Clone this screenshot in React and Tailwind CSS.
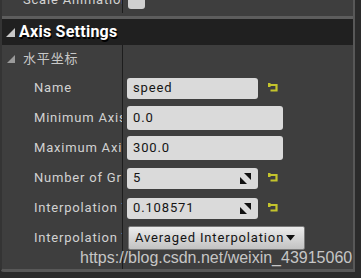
const YELLOW = '#c4c42c'

function ResetIcon() {
  return (
    <svg width="10" height="9" viewBox="0 0 10 9" className="shrink-0">
      <rect x="0" y="0" width="2.5" height="4" fill={YELLOW} />
      <path d="M1 2H8.5V7.5H2.5" stroke={YELLOW} strokeWidth="2.2" fill="none" />
    </svg>
  )
}

function SpinIcon() {
  return (
    <svg width="11" height="11" viewBox="0 0 11 11" className="shrink-0">
      <polygon points="4,0 11,0 11,7" fill="#111" />
      <polygon points="0,4 0,11 7,11" fill="#111" />
    </svg>
  )
}

function Tri({ size = 9, color = '#c4c4c4' }) {
  return (
    <svg width={size} height={size} viewBox="0 0 9 9" className="shrink-0">
      <polygon points="9,0 9,9 0,9" fill={color} />
    </svg>
  )
}

function Row({ label, children }) {
  return (
    <div className="flex h-[30px]">
      <div className="w-[121px] shrink-0 flex items-center pl-[32px] border-r border-[#1d1d1d] overflow-hidden whitespace-nowrap text-[#d2d2d2] tracking-[0.8px]">
        {label}
      </div>
      <div className="flex items-center pl-[4px]">{children}</div>
    </div>
  )
}

function Field({ value, wide, tall, spin, reset }) {
  return (
    <>
      <div
        className={`${wide ? 'w-[156px]' : 'w-[131px]'} ${tall ? 'h-[24px]' : 'h-[21px]'} rounded-[3px] bg-[#dadada] flex items-center justify-between pl-[6px] pr-[7px] text-[#151515]`}
      >
        <span>{value}</span>
        {spin && <SpinIcon />}
      </div>
      {reset && (
        <div className="ml-[10px] -mt-[2px]">
          <ResetIcon />
        </div>
      )}
    </>
  )
}

export default function App() {
  return (
    <div className="relative w-[361px] h-[278px] overflow-hidden bg-[#2b2b2b] font-['Roboto','Noto_Sans_CJK_SC',sans-serif] text-[13px] tracking-[0.85px]">
      <div className="w-[355px] h-[272px] flex flex-col bg-[#3e3e3e] border-l-2 border-l-[#343434] border-r-2 border-r-[#585858] border-b-[3px] border-b-[#585858] rounded-bl-[4px]">
        {/* clipped row above */}
        <div className="h-[16px] overflow-hidden">
          <div className="flex h-[26px] -mt-[13px]">
            <div className="w-[121px] shrink-0 flex items-center pl-[21px] border-r border-[#1d1d1d] whitespace-nowrap overflow-hidden text-[#d2d2d2] tracking-[0.8px]">
              Scale Animation
            </div>
            <div className="flex items-center pl-[5px]">
              <div className="w-[17px] h-[17px] rounded-[3px] bg-[#cfcfcf]" />
            </div>
          </div>
        </div>

        <div className="h-[29px] shrink-0 flex items-center bg-[#202020] border-t-[3px] border-[#5d5d5d] pl-[4px] gap-[4px]">
          <Tri size={9} color="#c8c8c8" />
          <span className="text-[16px] font-bold tracking-[0.25px] text-white [text-shadow:1px_2px_0_#000]">
            Axis Settings
          </span>
        </div>

        <div className="flex h-[28px]">
          <div className="w-[121px] shrink-0 flex items-center pl-[5px] gap-[8px] border-r border-[#1d1d1d] text-[#c8c8c8]">
            <Tri size={8} color="#9a9a9a" />
            <span>水平坐标</span>
          </div>
        </div>

        <Row label="Name">
          <Field value="speed" reset />
        </Row>
        <Row label="Minimum Axis Value">
          <Field value="0.0" wide tall />
        </Row>
        <Row label="Maximum Axis Value">
          <Field value="300.0" wide tall />
        </Row>
        <Row label="Number of Grid Divisions">
          <Field value="5" spin reset />
        </Row>
        <Row label="Interpolation Time">
          <Field value="0.108571" spin reset />
        </Row>
        <Row label="Interpolation Type">
          <div className="ml-[1px] w-[177px] h-[24px] rounded-[2px] border border-[#7a7a7a] bg-gradient-to-b from-[#ececec] to-[#c2c2c2] flex items-center justify-between pl-[6px] pr-[9px] text-[#141414]">
            <span>Averaged Interpolation</span>
            <svg width="9" height="6" viewBox="0 0 9 6" className="shrink-0 -ml-[6px]">
              <polygon points="0,0 9,0 4.5,5.5" fill="#111" />
            </svg>
          </div>
        </Row>
        <div className="flex flex-1">
          <div className="w-[121px] shrink-0 border-r border-[#1d1d1d]" />
        </div>
      </div>

      <div className="absolute left-[80px] top-[250px] font-['Liberation_Sans',Arial,sans-serif] text-[16px] leading-none tracking-normal text-[#c6c6c6] whitespace-nowrap">
        https://blog.csdn.net/weixin_43915060
      </div>
    </div>
  )
}
